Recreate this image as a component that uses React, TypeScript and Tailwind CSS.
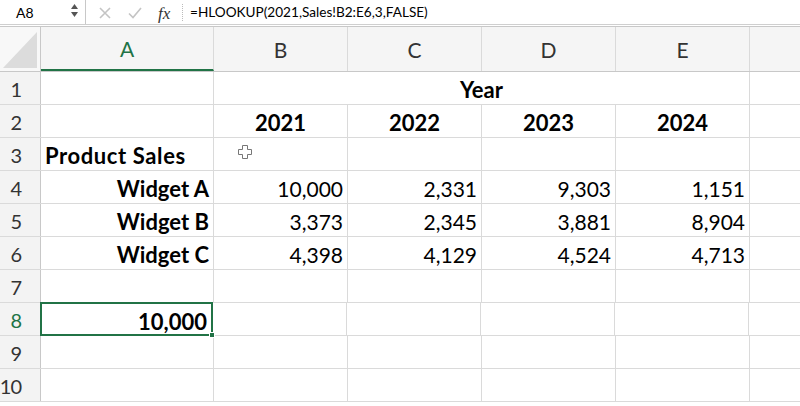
import React from "react";

const COLS = ["A", "B", "C", "D", "E", ""];
const COLW = ["w-[173px]", "w-[134px]", "w-[134px]", "w-[134px]", "w-[134px]", "flex-1"];

type Cell = { t: string; bold?: boolean; align?: "l" | "r" | "c" };

const data: Record<number, Cell[]> = {
  2: [{ t: "" }, { t: "2021", bold: true, align: "c" }, { t: "2022", bold: true, align: "c" }, { t: "2023", bold: true, align: "c" }, { t: "2024", bold: true, align: "c" }],
  3: [{ t: "Product Sales", bold: true, align: "l" }],
  4: [{ t: "Widget A", bold: true, align: "r" }, { t: "10,000", align: "r" }, { t: "2,331", align: "r" }, { t: "9,303", align: "r" }, { t: "1,151", align: "r" }],
  5: [{ t: "Widget B", bold: true, align: "r" }, { t: "3,373", align: "r" }, { t: "2,345", align: "r" }, { t: "3,881", align: "r" }, { t: "8,904", align: "r" }],
  6: [{ t: "Widget C", bold: true, align: "r" }, { t: "4,398", align: "r" }, { t: "4,129", align: "r" }, { t: "4,524", align: "r" }, { t: "4,713", align: "r" }],
};

function CellBox({ c, w, last }: { c?: Cell; w: string; last: boolean }) {
  const align = c?.align === "r" ? "justify-end pr-[4px]" : c?.align === "c" ? "justify-center" : "justify-start pl-[4px]";
  const wide = c?.t === "Product Sales" ? "tracking-[0.6px]" : "";
  return (
    <div className={`${w} h-full flex items-center pt-[3px] ${align} ${last ? "" : "border-r border-[#dadada]"} text-black ${c?.bold ? "font-bold text-[22px]" : "text-[21px]"} ${wide} whitespace-nowrap overflow-visible`}>
      {c?.t}
    </div>
  );
}

function RowHeader({ n, sel }: { n: number; sel?: boolean }) {
  return (
    <div className={`w-[41px] h-full flex items-center justify-end pr-[19px] pt-[2px] bg-[#f3f3f3] border-r border-[#c8c8c8] text-[20px] tracking-[-1px] ${sel ? "text-[#217346]" : "text-[#333]"}`}>
      {n}
    </div>
  );
}

function PlusCursor() {
  return (
    <svg width="16" height="16" viewBox="0 0 16 16" className="absolute left-[237px] top-[144px]">
      <path d="M5.5 1.5h5v4h4v5h-4v4h-5v-4h-4v-5h4z" fill="#fff" stroke="#777" strokeWidth="1" />
    </svg>
  );
}

export default function App() {
  const font = { fontFamily: "Lato, 'Noto Sans', sans-serif" };
  return (
    <div className="w-[800px] h-[406px] bg-white overflow-hidden relative" style={font}>
      {/* Formula bar */}
      <div className="h-[25px] flex items-center border-b border-[#cfcfcf] bg-white">
        <div className="w-[85px] h-full flex items-center pl-[16px] relative">
          <span className="text-[14px] text-black">A8</span>
          <div className="absolute left-[71px] top-[4px] flex flex-col items-center gap-[3px]">
            <svg width="7" height="5" viewBox="0 0 7 5"><path d="M0 5L3.5 0L7 5z" fill="#555" /></svg>
            <svg width="7" height="5" viewBox="0 0 7 5"><path d="M0 0L3.5 5L7 0z" fill="#555" /></svg>
          </div>
        </div>
        <div className="w-[1px] h-full bg-[#c8c8c8]" />
        <div className="w-[98px] h-full flex items-center relative">
          <svg width="12" height="12" viewBox="0 0 12 12" className="absolute left-[13px] top-[7px]">
            <path d="M1 1L11 11M11 1L1 11" stroke="#c4c4c4" strokeWidth="1.6" />
          </svg>
          <svg width="14" height="12" viewBox="0 0 14 12" className="absolute left-[42px] top-[7px]">
            <path d="M1 6.5L5 10.5L13 1" stroke="#c4c4c4" strokeWidth="1.6" fill="none" />
          </svg>
          <span className="absolute left-[72px] top-[1px] text-[17px] italic text-[#333]" style={{ fontFamily: "'Liberation Serif', serif" }}>
            fx
          </span>
          <div className="absolute left-[96px] top-[4px] h-[17px] border-l border-dotted border-[#bbb]" />
        </div>
        <span className="pl-[6px] text-[13.6px] text-black whitespace-nowrap">=HLOOKUP(2021,Sales!B2:E6,3,FALSE)</span>
      </div>
      <div className="h-[1px] bg-white" />
      {/* Column header */}
      <div className="h-[46px] flex border-t border-b border-[#c8c8c8] bg-[#f5f5f5]">
        <div className="w-[41px] h-full border-r border-[#c8c8c8] relative bg-[#f8f8f8]">
          <svg width="41" height="45" viewBox="0 0 41 45" className="absolute left-0 top-0">
            <path d="M3 41L37 5L37 41z" fill="#dcdcdc" />
          </svg>
        </div>
        {COLS.map((c, i) => (
          <div
            key={i}
            className={`${COLW[i]} h-full flex items-center justify-center text-[21px] pt-[1px] ${i < 5 ? "border-r border-[#dadada]" : ""} ${i === 0 ? "text-[#217346] border-b-2 border-b-[#217346]" : "text-[#333]"}`}
          >
            {c}
          </div>
        ))}
      </div>
      {/* Rows */}
      {Array.from({ length: 10 }, (_, r) => r + 1).map((n) => {
        const cells = data[n] || [];
        return (
          <div key={n} className="h-[33px] flex border-b border-[#dadada]">
            <RowHeader n={n} sel={n === 8} />
            {n === 1 ? (
              <>
                <CellBox w="w-[173px]" last={false} />
                <div className="w-[536px] h-full flex items-center justify-center pt-[3px] border-r border-[#dadada] text-[22px] font-bold text-black">
                  Year
                </div>
                <div className="flex-1" />
              </>
            ) : n === 8 ? (
              <>
                <div className="w-[173px] h-[34px] -mt-[1px] flex items-center justify-end pr-[4px] pt-[4px] border-2 border-[#217346] text-[22px] font-bold text-black relative -ml-[1px]">
                  10,000
                  <div className="absolute -right-[4px] -bottom-[4px] w-[6px] h-[6px] bg-[#217346] border border-white" />
                </div>
                {COLW.slice(1).map((w, i) => (
                  <CellBox key={i} w={w} last={i === 4} />
                ))}
              </>
            ) : (
              COLW.map((w, i) => <CellBox key={i} c={cells[i]} w={w} last={i === 5} />)
            )}
          </div>
        );
      })}
      <PlusCursor />
    </div>
  );
}
